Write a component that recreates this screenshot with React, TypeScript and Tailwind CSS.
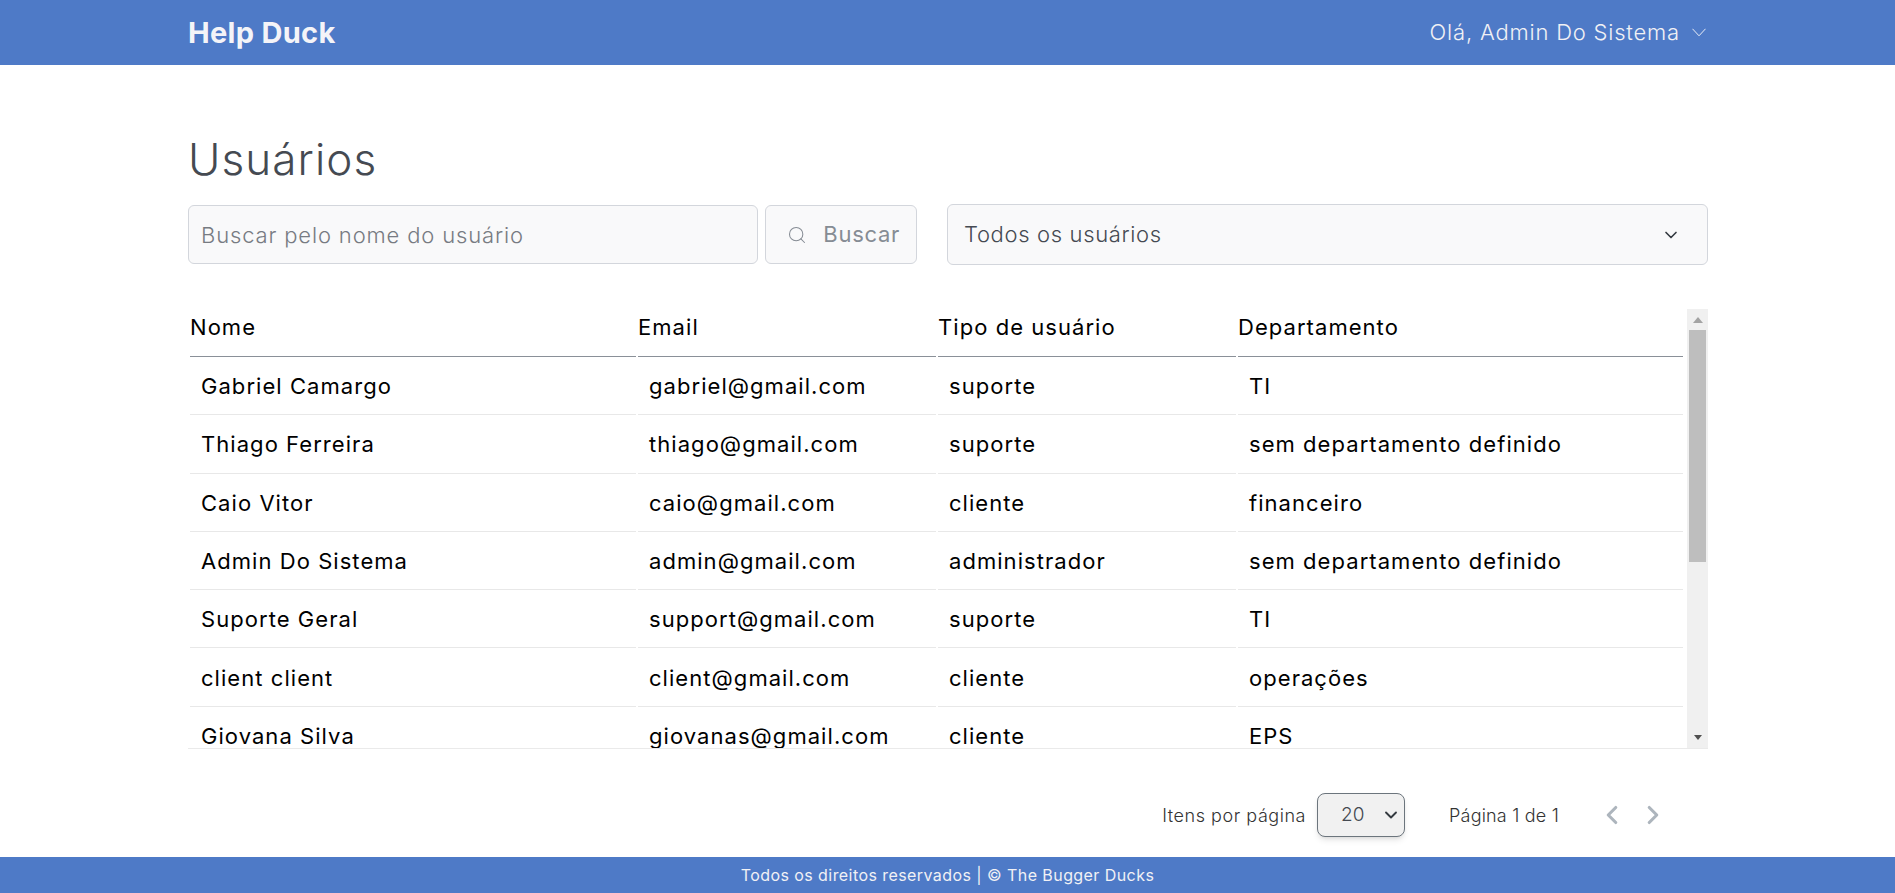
import { ChevronDown, ChevronLeft, ChevronRight, Search } from "lucide-react";

const users = [
  ["Gabriel Camargo", "gabriel@gmail.com", "suporte", "TI"],
  ["Thiago Ferreira", "thiago@gmail.com", "suporte", "sem departamento definido"],
  ["Caio Vitor", "caio@gmail.com", "cliente", "financeiro"],
  ["Admin Do Sistema", "admin@gmail.com", "administrador", "sem departamento definido"],
  ["Suporte Geral", "support@gmail.com", "suporte", "TI"],
  ["client client", "client@gmail.com", "cliente", "operações"],
  ["Giovana Silva", "giovanas@gmail.com", "cliente", "EPS"],
];

export default function App() {
  return (
    <div className="flex h-[893px] flex-col overflow-hidden bg-white font-['Inter',sans-serif]">
      {/* header */}
      <header className="flex h-[65px] shrink-0 items-center justify-between bg-[#4e7ac7] pl-[188px] pr-[189px]">
        <h1 className="text-[29px] font-bold tracking-[0.3px] text-[#f4f4f8]">Help Duck</h1>
        <button className="flex items-center gap-[12px] text-[22px] font-light tracking-[0.8px] text-[#f1f1f5]">
          Olá, Admin Do Sistema
          <svg width="14" height="9" viewBox="0 0 14 9" fill="none" stroke="#e8ecf6" strokeWidth="1">
            <path d="M.5.8 7 7.8 13.5.8" />
          </svg>
        </button>
      </header>

      {/* main */}
      <main className="flex flex-1 flex-col pl-[188px] pr-[187px] pt-[68px]">
        <h2 className="text-[44px] leading-[52px] font-light tracking-[1.1px] text-[#454a52]">Usuários</h2>

        <div className="mt-[19px] flex items-center">
          <input
            placeholder="Buscar pelo nome do usuário"
            className="h-[59px] w-[570px] rounded-md border border-[#d3d6dc] bg-[#f9f9fa] px-3 text-[22px] font-light tracking-[0.85px] text-[#555] placeholder:text-[#777b82]"
          />
          <button className="ml-[7px] flex h-[59px] w-[152px] items-center justify-between rounded-md border border-[#d3d6dc] bg-[#f9f9fa] pl-[21px] pr-[16px] text-[22px] tracking-[0.7px] text-[#868c94]">
            <Search size={20} strokeWidth={1.25} />
            Buscar
          </button>
          <div className="ml-[30px] flex h-[61px] flex-1 items-center justify-between rounded-md border border-[#d3d6dc] bg-[#f9f9fa] pl-[16px] pr-[26px] text-[22px] font-light tracking-[0.65px] text-[#454a52]">
            Todos os usuários
            <ChevronDown size={20} strokeWidth={2} className="text-[#343a40]" />
          </div>
        </div>

        {/* table + scrollbar */}
        <div className="mt-[44px] flex h-[440px] overflow-hidden border-b border-[#eaeaea]">
          <div className="flex-1 overflow-hidden">
            <table className="w-full table-fixed border-separate border-spacing-x-[2px] border-spacing-y-0 text-[22px] tracking-[1.05px] text-black">
              <colgroup>
                <col className="w-[446px]" />
                <col className="w-[298px]" />
                <col className="w-[298px]" />
                <col />
              </colgroup>
              <thead>
                <tr>
                  {["Nome", "Email", "Tipo de usuário", "Departamento"].map((h) => (
                    <th key={h} className="h-[48px] border-b border-[#8a9098] px-0 pb-[10px] text-left font-normal">
                      {h}
                    </th>
                  ))}
                </tr>
              </thead>
              <tbody>
                {users.map((u) => (
                  <tr key={u[1]}>
                    {u.map((c) => (
                      <td key={c} className="h-[58.3px] border-b border-[#e8e8e8] px-[11px] pt-[2px]">
                        {c}
                      </td>
                    ))}
                  </tr>
                ))}
              </tbody>
            </table>
          </div>

          {/* scrollbar */}
          <div className="ml-[2px] flex w-[21px] flex-col items-center bg-[#f0f0f0]">
            <div className="flex h-[21px] shrink-0 items-center justify-center">
              <svg width="10" height="6" viewBox="0 0 10 6"><path d="M5 0 10 6H0z" fill="#a3a3a3" /></svg>
            </div>
            <div className="h-[232px] w-[17px] bg-[#bebebe]" />
            <div className="flex-1" />
            <div className="flex h-[21px] shrink-0 items-center justify-center">
              <svg width="8" height="5" viewBox="0 0 8 5"><path d="M0 0H8L4 5z" fill="#505050" /></svg>
            </div>
          </div>
        </div>

        {/* pagination */}
        <div className="mt-[44px] flex items-center justify-end text-[18px] font-light text-[#333]">
          <span className="tracking-[0.55px]">Itens por página</span>
          <div className="ml-[11px] flex h-[44px] w-[88px] items-center justify-between rounded-lg border border-[#6c757d] bg-[#f1f1f1] pl-[23px] pr-[3px] text-[19px] text-[#454a52] shadow-md">
            20
            <ChevronDown size={20} strokeWidth={2.25} className="text-[#343a40]" />
          </div>
          <span className="ml-[44px] tracking-[0.2px]">Página 1 de 1</span>
          <ChevronLeft size={30} strokeWidth={2.5} className="ml-[38px] text-[#adb5bd]" />
          <ChevronRight size={30} strokeWidth={2.5} className="ml-[11px] mr-[40px] text-[#adb5bd]" />
        </div>
      </main>

      {/* footer */}
      <footer className="flex h-[36px] shrink-0 items-center justify-center bg-[#4e7ac7] text-[16px] tracking-[0.43px] text-[#f1f1f5]">
        Todos os direitos reservados | © The Bugger Ducks
      </footer>
    </div>
  );
}
